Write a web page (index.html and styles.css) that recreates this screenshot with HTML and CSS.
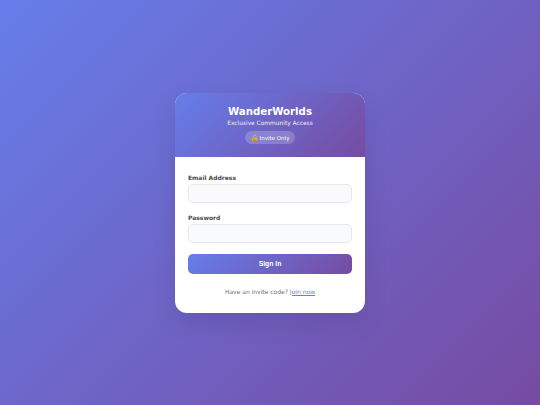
FILE: index.html
```html
<!DOCTYPE html>
<html lang="en">
<head>
  <meta charset="UTF-8" />
  <meta name="viewport" content="width=device-width, initial-scale=1.0" />
  <title>WanderWorlds</title>
  <link rel="stylesheet" href="styles.css">
</head>
<body>
  <div class="card">
    <div class="card-header">
      <h1>WanderWorlds</h1>
      <p class="tagline">Exclusive Community Access</p>
      <span class="badge">
        <svg class="badge-icon" viewBox="0 0 12 12" aria-hidden="true">
          <path d="M3.6 5.6V4a2.3 2.3 0 0 1 4.6 0v1.6" fill="none" stroke="#b9bcc4" stroke-width="1.2"/>
          <rect x="2.2" y="5.4" width="7.4" height="5.2" rx="0.8" fill="#e8a91f"/>
          <circle cx="3" cy="8" r="1.5" fill="#d9b64a"/>
          <path d="M3 8l5 3" stroke="#8a6a22" stroke-width="1"/>
        </svg>
        Invite Only
      </span>
    </div>
    <form class="card-body">
      <label for="email">Email Address</label>
      <input type="email" id="email">
      <label for="password">Password</label>
      <input type="password" id="password">
      <button type="button" class="signin">Sign In</button>
      <p class="join">Have an invite code? <a href="#">Join now</a></p>
    </form>
  </div>
</body>
</html>
```

FILE: styles.css
```css
* {
  box-sizing: border-box;
}
body {
  margin: 0;
  height: 405px;
  display: flex;
  align-items: center;
  justify-content: center;
  font-family: "DejaVu Sans", sans-serif;
  background: linear-gradient(135deg, #667eea 0%, #764ba2 100%);
}
.card {
  width: 190px;
  height: 220px;
  background: #fff;
  border-radius: 12px;
  overflow: hidden;
  box-shadow: 0 10px 25px rgba(0, 0, 0, 0.1);
}
.card-header {
  height: 64px;
  padding-top: 12px;
  text-align: center;
  color: #fff;
  background: linear-gradient(135deg, #667eea 0%, #764ba2 100%);
}
h1 {
  margin: 0;
  font-size: 10.2px;
  line-height: 13px;
  font-weight: 700;
}
.tagline {
  margin: 1px 0 0;
  font-size: 5.9px;
  line-height: 8px;
  opacity: 0.9;
}
.badge {
  display: inline-flex;
  align-items: center;
  justify-content: center;
  gap: 1px;
  width: 50px;
  height: 13px;
  margin-top: 2px;
  font-size: 5.5px;
  background: rgba(255, 255, 255, 0.2);
  border-radius: 7px;
}
.badge-icon {
  width: 8px;
  height: 8px;
}
.card-body {
  padding: 17px 13px 0;
}
label {
  display: block;
  font-size: 6px;
  line-height: 8px;
  font-weight: 700;
  color: #4b4b4b;
  margin-bottom: 2px;
}
input {
  display: block;
  width: 100%;
  height: 19px;
  margin-bottom: 11px;
  background: #f9fafb;
  border: 1px solid #e5e7eb;
  border-radius: 5px;
}
.signin {
  display: block;
  width: 100%;
  height: 20px;
  padding: 0;
  border: 0;
  border-radius: 5px;
  color: #fff;
  font-family: "Liberation Sans", sans-serif;
  font-size: 6.8px;
  font-weight: 700;
  background: linear-gradient(135deg, #667eea 0%, #764ba2 100%);
}
.join {
  margin: 13px 0 0;
  text-align: center;
  font-size: 6px;
  line-height: 9px;
  color: #6f6f6f;
}
.join a {
  color: #667eea;
}
```
